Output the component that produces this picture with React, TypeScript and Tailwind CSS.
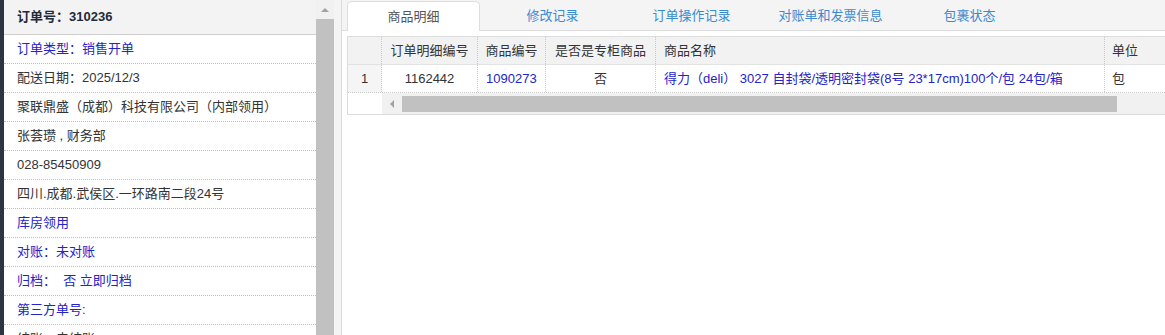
import React from 'react';

const FONT = { fontFamily: '"Liberation Sans", "Noto Sans CJK SC", sans-serif' };

const leftRows: { text: string; blue?: boolean }[] = [
  { text: '订单类型：销售开单', blue: true },
  { text: '配送日期：2025/12/3' },
  { text: '聚联鼎盛（成都）科技有限公司（内部领用）' },
  { text: '张荟瓒 , 财务部' },
  { text: '028-85450909' },
  { text: '四川.成都.武侯区.一环路南二段24号' },
  { text: '库房领用', blue: true },
  { text: '对账：未对账', blue: true },
  { text: '归档：  否 立即归档', blue: true },
  { text: '第三方单号:', blue: true },
  { text: '结账：未结账' },
];

const tabs = ['商品明细', '修改记录', '订单操作记录', '对账单和发票信息', '包裹状态'];

const App: React.FC = () => {
  return (
    <div className="flex h-[335px] w-[1165px] overflow-hidden bg-white text-[13px]" style={FONT}>
      {/* dark edge */}
      <div className="w-[4px] shrink-0 bg-[#2d3640]" />

      {/* order info panel */}
      <div className="w-[312px] shrink-0 bg-white">
        <div className="flex h-[35px] items-center border-b border-[#cfcfcf] bg-[#f3f3f3] pl-[13px] font-bold text-[#1f2b3a]">
          订单号：310236
        </div>
        {leftRows.map((row, i) => (
          <div
            key={i}
            className={`flex h-[29px] items-center border-b border-dotted border-[#bdbdbd] pl-[13px] whitespace-pre ${
              row.blue ? 'text-[#2323c8]' : 'text-[#333]'
            }`}
          >
            {row.text}
          </div>
        ))}
      </div>

      {/* scrollbar */}
      <div className="flex w-[18px] shrink-0 flex-col bg-[#f1f1f1]">
        <div className="flex h-[19px] items-center justify-center">
          <div className="h-0 w-0 border-x-[4px] border-b-[4px] border-x-transparent border-b-[#a3a3a3]" />
        </div>
        <div className="flex-1 bg-[#c1c1c1]" />
      </div>

      {/* splitter */}
      <div className="w-[8px] shrink-0 border-r border-[#dcdcdc] bg-[#f4f4f4]" />

      {/* right panel */}
      <div className="min-w-0 flex-1 bg-white">
        <div className="flex h-[31px] items-end gap-[6px] border-b border-[#dddddd] bg-[#f4f4f4] pl-[5px]">
          {tabs.map((t, i) => (
            <div
              key={t}
              className={`flex h-[29px] w-[133px] shrink-0 items-center justify-center ${
                i === 0
                  ? '-mb-px h-[30px] rounded-t-[5px] border border-b-0 border-[#dddddd] bg-white text-[#555]'
                  : 'text-[#3a8ad0]'
              }`}
            >
              {t}
            </div>
          ))}
        </div>

        <div className="pl-[5px] pt-[5px]">
          <div className="w-[830px] border border-r-0 border-[#dcdcdc] text-[#333]">
            {/* header */}
            <div className="flex h-[28px] items-center border-b border-[#e2e2e2] bg-[#f2f2f2]">
              <div className="h-full w-[34px] shrink-0 border-r border-dotted border-[#c8c8c8]" />
              <div className="flex h-full w-[96px] shrink-0 items-center justify-center border-r border-dotted border-[#c8c8c8]">
                订单明细编号
              </div>
              <div className="flex h-full w-[68px] shrink-0 items-center justify-center border-r border-dotted border-[#c8c8c8]">
                商品编号
              </div>
              <div className="flex h-full w-[110px] shrink-0 items-center justify-center border-r border-dotted border-[#c8c8c8]">
                是否是专柜商品
              </div>
              <div className="flex h-full w-[449px] shrink-0 items-center border-r border-dotted border-[#c8c8c8] pl-[8px]">
                商品名称
              </div>
              <div className="flex h-full flex-1 items-center pl-[7px]">单位</div>
            </div>
            {/* data row */}
            <div className="flex h-[28px] items-center border-b border-dotted border-[#c8c8c8]">
              <div className="flex h-full w-[34px] shrink-0 items-center justify-center border-r border-dotted border-[#c8c8c8] bg-[#f5f5f5]">
                1
              </div>
              <div className="flex h-full w-[96px] shrink-0 items-center justify-center border-r border-dotted border-[#c8c8c8]">
                1162442
              </div>
              <div className="flex h-full w-[68px] shrink-0 items-center border-r border-dotted border-[#c8c8c8] pl-[8px] text-[#2323c8]">
                1090273
              </div>
              <div className="flex h-full w-[110px] shrink-0 items-center justify-center border-r border-dotted border-[#c8c8c8]">
                否
              </div>
              <div className="flex h-full w-[449px] shrink-0 items-center border-r border-dotted border-[#c8c8c8] pl-[8px] whitespace-pre text-[#2323c8]">
                得力（deli） 3027 自封袋/透明密封袋(8号 23*17cm)100个/包 24包/箱
              </div>
              <div className="flex h-full flex-1 items-center pl-[7px]">包</div>
            </div>
            {/* horizontal scrollbar */}
            <div className="flex h-[21px]">
              <div className="w-[34px] shrink-0 bg-white" />
              <div className="flex flex-1 items-center bg-[#f1f1f1]">
                <div className="flex w-[20px] shrink-0 items-center justify-center">
                  <div className="h-0 w-0 border-y-[4px] border-r-[4px] border-y-transparent border-r-[#a3a3a3]" />
                </div>
                <div className="h-[16px] w-[715px] bg-[#c1c1c1]" />
              </div>
            </div>
          </div>
        </div>
      </div>
    </div>
  );
};

export default App;
